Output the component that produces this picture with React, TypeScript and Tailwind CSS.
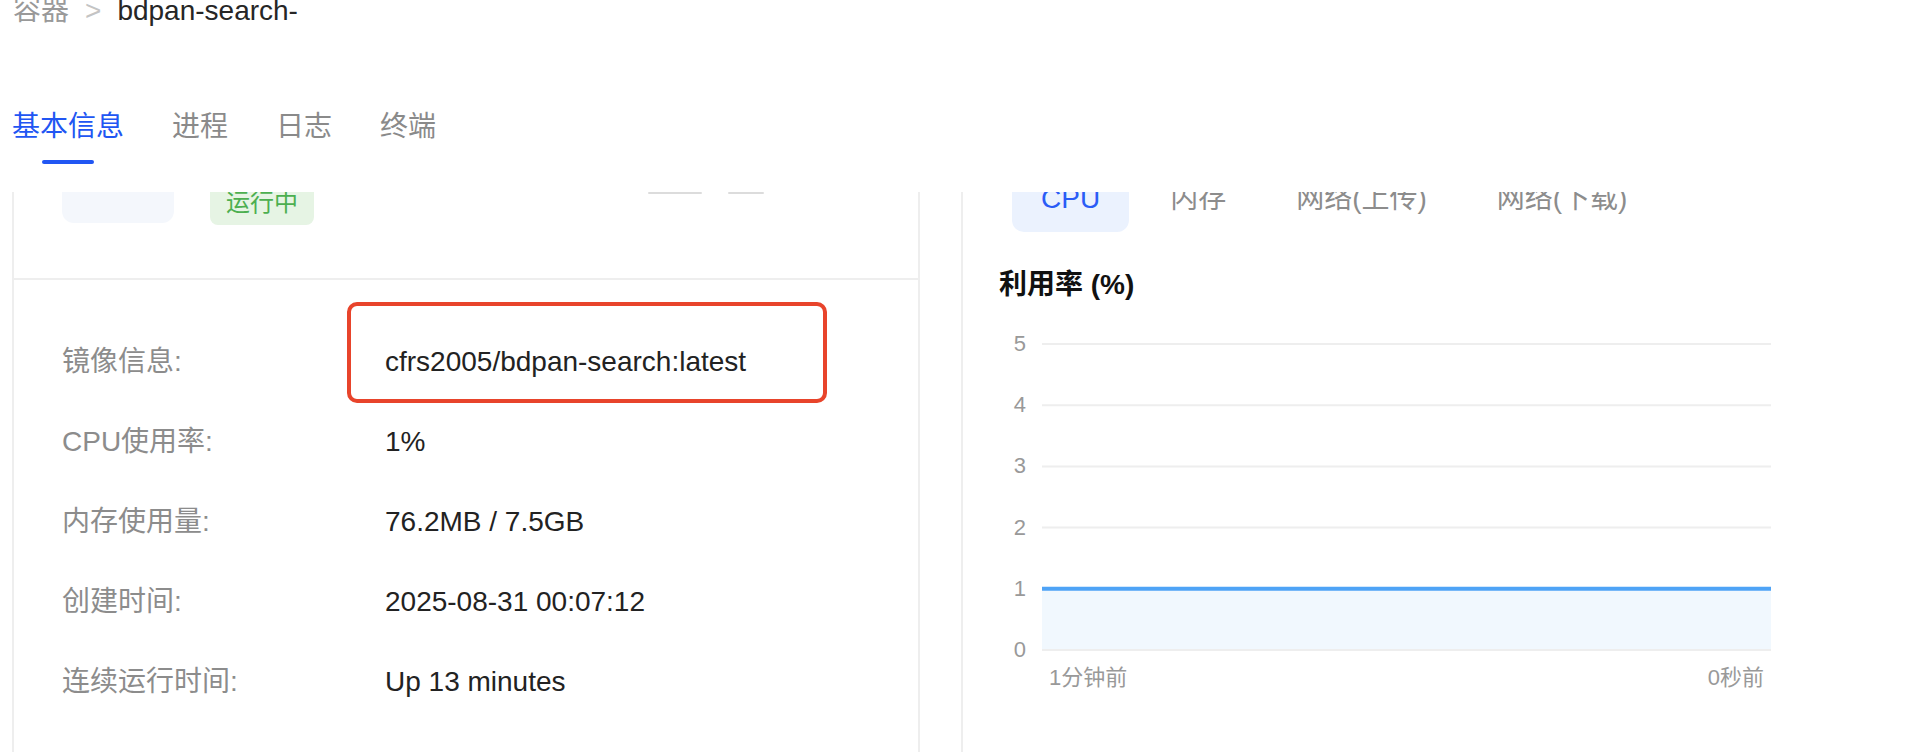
import React from "react";

const rows: { label: string; value: string }[] = [
  { label: "镜像信息:", value: "cfrs2005/bdpan-search:latest" },
  { label: "CPU使用率:", value: "1%" },
  { label: "内存使用量:", value: "76.2MB / 7.5GB" },
  { label: "创建时间:", value: "2025-08-31 00:07:12" },
  { label: "连续运行时间:", value: "Up 13 minutes" },
];

const tabs = ["基本信息", "进程", "日志", "终端"];
const seg = ["CPU", "内存", "网络(上传)", "网络(下载)"];

function Chart() {
  const w = 729;
  const step = 61.2;
  const ys = [0, 1, 2, 3, 4, 5].map((i) => 1 + i * step);
  return (
    <svg width={w} height={310} viewBox={`0 0 ${w} 310`} className="block">
      <rect x={0} y={ys[4]} width={w} height={ys[5] - ys[4]} fill="#f1f8fe" />
      {ys.map((y, i) => (
        <line key={i} x1={0} x2={w} y1={y} y2={y} stroke="#eeeeee" strokeWidth={2} />
      ))}
      <line x1={0} x2={w} y1={ys[4]} y2={ys[4]} stroke="#4ea3f6" strokeWidth={4} />
    </svg>
  );
}

export default function App() {
  return (
    <div className="w-[1918px] h-[752px] overflow-hidden bg-white font-[family-name:'Liberation_Sans','Noto_Sans_CJK_SC',sans-serif]">
      {/* breadcrumb */}
      <div className="-mt-[3px] h-[28px] flex items-start gap-4 pl-[13px] text-[28px] leading-[28px]">
        <span className="text-[#999999]">容器</span>
        <span className="text-[#c4c4c4]">&gt;</span>
        <span className="text-[#262626]">bdpan-search-</span>
      </div>

      {/* tabs */}
      <div className="mt-[88px] flex gap-12 pl-[12px]">
        {tabs.map((t, i) => (
          <div key={t} className="flex flex-col items-center">
            <span
              className={
                "text-[28px] leading-[28px] " +
                (i === 0 ? "text-[#2156f3]" : "text-[#8a8a8a]")
              }
            >
              {t}
            </span>
            <div
              className={
                "mt-[19px] w-[52px] h-[4px] rounded-full " +
                (i === 0 ? "bg-[#2156f3]" : "bg-transparent")
              }
            />
          </div>
        ))}
      </div>

      {/* content (scrolled) */}
      <div className="mt-[28px] h-[560px] overflow-hidden flex pl-[12px]">
        {/* left card */}
        <div className="w-[908px] shrink-0 border-x-2 border-[#eeeeee] flex flex-col">
          <div className="h-[86px] flex items-start">
            <div className="ml-[48px] -mt-[20px] w-[112px] h-[51px] rounded-[12px] bg-[#f4f7fc]" />
            <div className="ml-[36px] -mt-[11px] h-[44px] px-4 rounded-[8px] bg-[#e6f4e4] text-[#4caf50] text-[24px] leading-[24px] flex items-center">
              运行中
            </div>
            <div className="ml-[334px] w-[54px] h-[2px] rounded-full bg-[#dcdcdc]" />
            <div className="ml-[26px] w-[36px] h-[2px] rounded-full bg-[#dcdcdc]" />
          </div>
          <div className="h-[2px] bg-[#eeeeee]" />
          <div className="pt-[42px] flex flex-col">
            {rows.map((r, i) => (
              <div key={r.label} className="relative h-[80px] flex items-center text-[28px] leading-[28px]">
                <span className="ml-[48px] w-[323px] shrink-0 text-[#8c8c8c]">{r.label}</span>
                <span className="text-[#222222] whitespace-nowrap">{r.value}</span>
                {i === 0 && (
                  <div className="absolute left-[333px] top-[-20px] w-[480px] h-[101px] border-4 border-[#e8442b] rounded-[10px]" />
                )}
              </div>
            ))}
          </div>
        </div>

        {/* right card */}
        <div className="ml-[41px] flex-1 border-l-2 border-[#eeeeee] flex flex-col">
          <div className="-mt-[26px] ml-[49px] h-[66px] flex gap-3">
            {seg.map((s, i) => (
              <div
                key={s}
                className={
                  "px-[29px] flex items-center rounded-[12px] text-[28px] leading-[28px] whitespace-nowrap " +
                  (i === 0 ? "bg-[#ebf2fe] text-[#2a5cf6]" : "text-[#8c8c8c]")
                }
              >
                {s}
              </div>
            ))}
          </div>
          <div className="mt-[39px] ml-[36px] text-[28px] leading-[28px] font-bold text-[#111111]">
            利用率 (%)
          </div>
          <div className="mt-[34px] flex">
            <div className="w-[63px] h-[328px] flex flex-col justify-between items-end text-[22px] leading-[22px] text-[#999999]">
              {["5", "4", "3", "2", "1", "0"].map((n) => (
                <span key={n}>{n}</span>
              ))}
            </div>
            <div className="ml-[16px] mt-[10px] flex flex-col w-[729px]">
              <Chart />
              <div className="mt-[14px] flex justify-between px-[7px] text-[22px] leading-[22px] text-[#999999]">
                <span>1分钟前</span>
                <span>0秒前</span>
              </div>
            </div>
          </div>
        </div>
      </div>
    </div>
  );
}
